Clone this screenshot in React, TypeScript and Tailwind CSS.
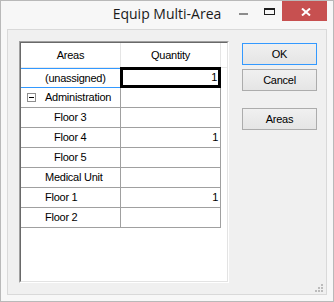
import React from "react";

const rows = [
  { id: "admin", label: "Administration", qty: "", indent: 24, toggle: true },
  { id: "f3", label: "Floor 3", qty: "", indent: 33 },
  { id: "f4", label: "Floor 4", qty: "1", indent: 33 },
  { id: "f5", label: "Floor 5", qty: "", indent: 33 },
  { id: "med", label: "Medical Unit", qty: "", indent: 24 },
  { id: "f1", label: "Floor 1", qty: "1", indent: 24 },
  { id: "f2", label: "Floor 2", qty: "", indent: 24 },
];

export default function App() {
  return (
    <div className="w-[334px] h-[302px] border border-[#b9b9b9] bg-[#f7f7f7] flex flex-col font-['Liberation_Sans',Arial,sans-serif] text-[11px] tracking-[-0.25px] text-black">
      <TitleBar />
      <div className="relative mx-[6px] mb-[6px] flex-1 border border-[#d9d9d9] bg-[#f0f0f0] flex pl-[11px] pt-[11px]">
        <Grid />
        <div className="ml-[13px] pt-[2px] flex flex-col">
          <Button label="OK" focused />
          <Button label="Cancel" className="mt-[4px]" />
          <Button label="Areas" className="mt-[17px]" />
        </div>
        <Grip />
      </div>
    </div>
  );
}

function TitleBar() {
  return (
    <div className="h-[28px] grid grid-cols-[1fr_auto_1fr]">
      <div />
      <div className="pt-[4px] font-['Open_Sans',sans-serif] text-[14px] leading-[18px] tracking-normal text-[#1a1a1a]">
        Equip Multi-Area
      </div>
      <div className="flex justify-end items-start mr-[6px]">
        <div className="w-[26px] h-[20px] flex justify-center pt-[12px]">
          <span className="block w-[9px] h-[2px] bg-[#8c8c8c]" />
        </div>
        <div className="w-[26px] h-[20px] flex justify-center pt-[7px]">
          <span className="block w-[11px] h-[7px] border border-t-2 border-[#1e1e1e]" />
        </div>
        <div className="w-[45px] h-[20px] bg-[#c75050] flex justify-center pt-[7px]">
          <svg width="10" height="8" viewBox="0 0 10 8" className="ml-[2px]">
            <path d="M1 0.5 L9 7.5 M9 0.5 L1 7.5" stroke="#fff" strokeWidth="2" />
          </svg>
        </div>
      </div>
    </div>
  );
}

function Grid() {
  return (
    <div className="w-[210px] h-[242px] border border-t-[#a0a0a0] border-l-[#a0a0a0] border-r-white border-b-white">
      <div className="w-full h-full border border-t-[#696969] border-l-[#696969] border-r-[#e3e3e3] border-b-[#e3e3e3] bg-white">
        <div className="h-[24px] flex">
          <div className="w-[100px] border-r border-[#e5e5e5] flex items-center justify-center">Areas</div>
          <div className="w-[100px] border-r border-[#e5e5e5] flex items-center justify-center">Quantity</div>
        </div>
        <div className="h-[21px] flex">
          <div className="w-[99px] flex flex-col">
            <span className="h-px bg-[#eaeaea]" />
            <div className="h-[20px] border-y border-[#3399ff] flex items-center pl-[24px]">(unassigned)</div>
          </div>
          <div className="w-[101px] border-[3px] border-black flex items-center justify-end pr-[1px]">1</div>
          <div className="flex-1 flex flex-col">
            <span className="h-px bg-[#eaeaea]" />
          </div>
        </div>
        {rows.map((row) => (
          <div key={row.id} className="h-[20px] flex">
            <div
              className="w-[100px] border-r border-b border-[#a0a0a0] flex items-center relative"
              style={{ paddingLeft: row.indent }}
            >
              {row.toggle && (
                <span className="absolute left-[6px] top-[5px] w-[9px] h-[9px] border border-[#8e8e8e] flex items-center justify-center">
                  <span className="block w-[5px] h-px bg-black" />
                </span>
              )}
              {row.label}
            </div>
            <div className="w-[100px] border-r border-b border-[#a0a0a0] flex items-center justify-end pr-[2px]">
              {row.qty}
            </div>
          </div>
        ))}
      </div>
    </div>
  );
}

function Button({ label, focused, className }: { label: string; focused?: boolean; className?: string }) {
  return (
    <button
      className={`w-[75px] h-[22px] border ${focused ? "border-[#3399ff]" : "border-[#acacac]"} bg-gradient-to-b from-[#f0f0f0] to-[#e5e5e5] flex items-center justify-center ${className ?? ""}`}
    >
      {label}
    </button>
  );
}

function Grip() {
  const dots = [
    [2, 0],
    [1, 1],
    [2, 1],
    [0, 2],
    [1, 2],
    [2, 2],
  ];
  return (
    <div className="absolute right-[3px] bottom-[2px] w-[8px] h-[8px]">
      {dots.map(([c, r]) => (
        <span
          key={`${c}-${r}`}
          className="absolute w-[2px] h-[2px] bg-[#bcbcbc]"
          style={{ left: c * 3, top: r * 3 }}
        />
      ))}
    </div>
  );
}
